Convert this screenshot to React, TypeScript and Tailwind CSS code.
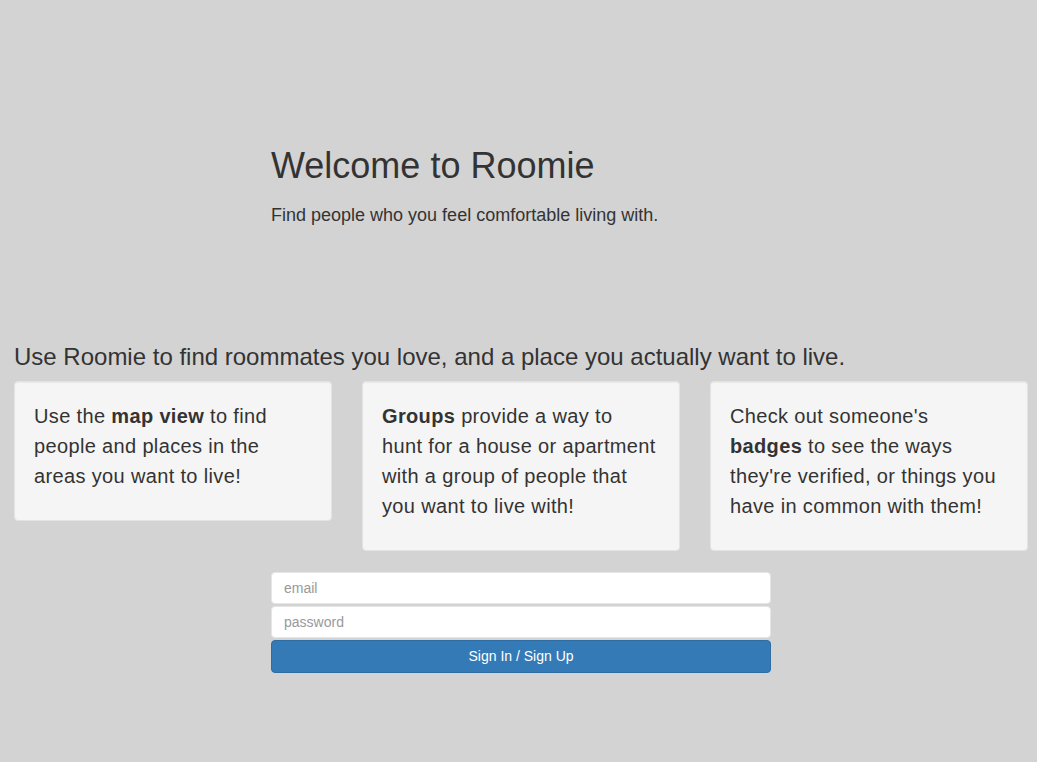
import React from "react";

const cards: React.ReactNode[] = [
  <>
    Use the <b>map view</b> to find
    <br />
    people and places in the
    <br />
    areas you want to live!
  </>,
  <>
    <b>Groups</b> provide a way to
    <br />
    hunt for a house or apartment
    <br />
    with a group of people that
    <br />
    you want to live with!
  </>,
  <>
    Check out someone's
    <br />
    <b>badges</b> to see the ways
    <br />
    they're verified, or things you
    <br />
    have in common with them!
  </>,
];

export default function App() {
  return (
    <div className="min-h-screen bg-[#d3d3d3] text-[#333] font-['Liberation_Sans',Arial,sans-serif]">
      {/* Hero */}
      <div className="pl-[271px] pt-[146px]">
        <h1 className="text-[36px] leading-[1.1]">Welcome to Roomie</h1>
        <p className="mt-[16px] text-[18px] leading-[26px]">Find people who you feel comfortable living with.</p>
      </div>

      {/* Features */}
      <h3 className="mt-[116px] pl-[14px] text-[24px] leading-[1.1]">
        Use Roomie to find roommates you love, and a place you actually want to live.
      </h3>
      <div className="mt-[11px] pl-[14px] flex items-start gap-[30.5px]">
        {cards.map((c, i) => (
          <div
            key={i}
            className="w-[317.5px] rounded-[4px] border border-[#e3e3e3] bg-[#f5f5f5] p-[19px] shadow-[inset_0_1px_1px_rgba(0,0,0,0.05)]"
          >
            <p className="mb-[10px] whitespace-nowrap text-[20px] leading-[30px] tracking-[0.35px]">{c}</p>
          </div>
        ))}
      </div>

      {/* Sign in */}
      <form className="mt-[21px] ml-[271px] w-[500px] flex flex-col" onSubmit={(e) => e.preventDefault()}>
        <input
          type="email"
          placeholder="email"
          className="h-[32px] rounded-[4px] border border-[#e6e6e6] bg-white px-3 text-[14px] placeholder:text-[#999] outline-none"
        />
        <input
          type="password"
          placeholder="password"
          className="mt-[2px] h-[32px] rounded-[4px] border border-[#e6e6e6] bg-white px-3 text-[14px] placeholder:text-[#999] outline-none"
        />
        <button
          type="submit"
          className="mt-[2px] h-[33px] rounded-[4px] border border-[#2e6da4] bg-[#337ab7] text-[14px] text-white"
        >
          Sign In / Sign Up
        </button>
      </form>
    </div>
  );
}
